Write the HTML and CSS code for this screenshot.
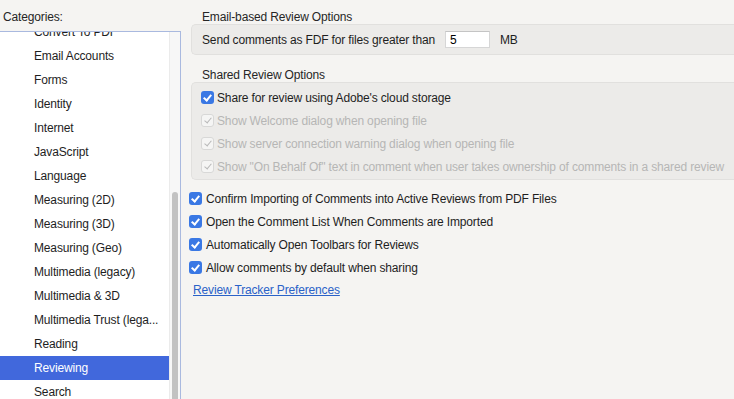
FILE: index.html
```html
<!doctype html>
<html>
	<head>
		<title>Preferences - Reviewing</title>
		<link rel="stylesheet" href="styles.css">
	</head>
	<body>
		<div id="categories">
			<div class="label">Categories:</div>
			<div class="list">
				<div class="items">
					<div class="item">Convert To PDF</div>
					<div class="item">Email Accounts</div>
					<div class="item">Forms</div>
					<div class="item">Identity</div>
					<div class="item">Internet</div>
					<div class="item">JavaScript</div>
					<div class="item">Language</div>
					<div class="item">Measuring (2D)</div>
					<div class="item">Measuring (3D)</div>
					<div class="item">Measuring (Geo)</div>
					<div class="item">Multimedia (legacy)</div>
					<div class="item">Multimedia &amp; 3D</div>
					<div class="item">Multimedia Trust (lega...</div>
					<div class="item">Reading</div>
					<div class="item selected">Reviewing</div>
					<div class="item">Search</div>
				</div>
				<div class="scrollbar"><div class="thumb"></div></div>
			</div>
		</div>

		<div id="panel">
			<div class="title">Email-based Review Options</div>
			<div class="group email">
				<span>Send comments as FDF for files greater than</span>
				<input class="size" type="text" value="5" />
				<span>MB</span>
			</div>

			<div class="title">Shared Review Options</div>
			<div class="group shared">
				<label class="check"><span class="box on"></span>Share for review using Adobe's cloud storage</label>
				<label class="check disabled"><span class="box on"></span>Show Welcome dialog when opening file</label>
				<label class="check disabled"><span class="box on"></span>Show server connection warning dialog when opening file</label>
				<label class="check disabled"><span class="box on"></span>Show "On Behalf Of" text in comment when user takes ownership of comments in a shared review</label>
			</div>

			<div class="loose">
				<label class="check"><span class="box on"></span>Confirm Importing of Comments into Active Reviews from PDF Files</label>
				<label class="check"><span class="box on"></span>Open the Comment List When Comments are Imported</label>
				<label class="check"><span class="box on"></span>Automatically Open Toolbars for Reviews</label>
				<label class="check"><span class="box on"></span>Allow comments by default when sharing</label>
				<a href="#1" class="tracker">Review Tracker Preferences</a>
			</div>
		</div>
	</body>
</html>
```

FILE: styles.css
```css
html, body {
	padding: 0;
	margin: 0;
}
body {
	font-family: "Liberation Sans", Arial, sans-serif;
	font-size: 12px;
	letter-spacing: -0.15px;
	color: #1e1e1e;
	background-color: #f5f4f2;
	display: flex;
	height: 399px;
	overflow: hidden;
	-webkit-user-select: none;
	user-select: none;
}

#categories {
	width: 181px;
	flex: none;
	display: flex;
	flex-direction: column;
}
#categories .label {
	padding: 10px 0 0 3px;
	height: 31px;
	line-height: 14px;
	box-sizing: border-box;
	color: #262626;
}
.list {
	flex: 1;
	display: flex;
	background-color: white;
	border-top: 1px solid #a9b9df;
	border-right: 1px solid #a9b9df;
	overflow: hidden;
}
.items {
	width: 169px;
	margin-top: -12px;
}
.item {
	height: 24px;
	line-height: 24px;
	padding-left: 34px;
	white-space: nowrap;
}
.item.selected {
	background-color: #4168dc;
	color: white;
}
.scrollbar {
	flex: 1;
	background-color: #f7f7f7;
	border-left: 1px solid #ebebeb;
	padding: 160px 2px 0;
}
.thumb {
	height: 300px;
	background-color: #c2c2c2;
	border-radius: 4px;
}

#panel {
	flex: 1;
	padding-left: 10px;
	min-width: 0;
}
.title {
	padding-left: 11px;
	height: 24px;
	line-height: 16px;
	padding-top: 9px;
	box-sizing: border-box;
	color: #262626;
}
.group {
	background-color: #ecebe9;
	border: 1px solid #e1e0de;
	border-right: none;
	border-radius: 5px 0 0 5px;
	margin-right: -10px;
	padding-left: 10px;
}
.group.email {
	height: 31px;
	box-sizing: border-box;
	display: flex;
	align-items: center;
	margin-bottom: 3px;
}
.size {
	font: inherit;
	width: 45px;
	height: 17px;
	box-sizing: border-box;
	border: 1px solid #d6d6d6;
	border-top-color: #c4c4c4;
	margin: 0 10px;
	padding: 1px 4px 0;
	background-color: white;
	outline: none;
}
.group.shared {
	height: 98px;
	box-sizing: border-box;
	padding-top: 3px;
	padding-left: 9px;
}
.check {
	display: flex;
	align-items: center;
	height: 23px;
	white-space: nowrap;
}
.box {
	width: 13px;
	height: 13px;
	box-sizing: border-box;
	border-radius: 3px;
	margin-right: 4px;
	flex: none;
	display: flex;
	align-items: center;
	justify-content: center;
}
.group .box {
	margin-right: 3px;
}
.box.on {
	background-color: #3a78e4;
}
.box.on::after {
	content: "";
	width: 3px;
	height: 6px;
	border: solid white;
	border-width: 0 2px 2px 0;
	transform: translateY(-1px) rotate(40deg);
}
.check.disabled {
	color: #b6b6b5;
}
.check.disabled .box {
	background-color: #f5f5f4;
	border: 1px solid #d8d8d7;
}
.check.disabled .box::after {
	border-color: #b8b8b8;
	border-width: 0 1.5px 1.5px 0;
}
.loose {
	padding-top: 7px;
	margin-left: -2px;
}
.tracker {
	display: block;
	margin: 3px 0 0 4px;
	color: #2a62c8;
	line-height: 16px;
}
```
